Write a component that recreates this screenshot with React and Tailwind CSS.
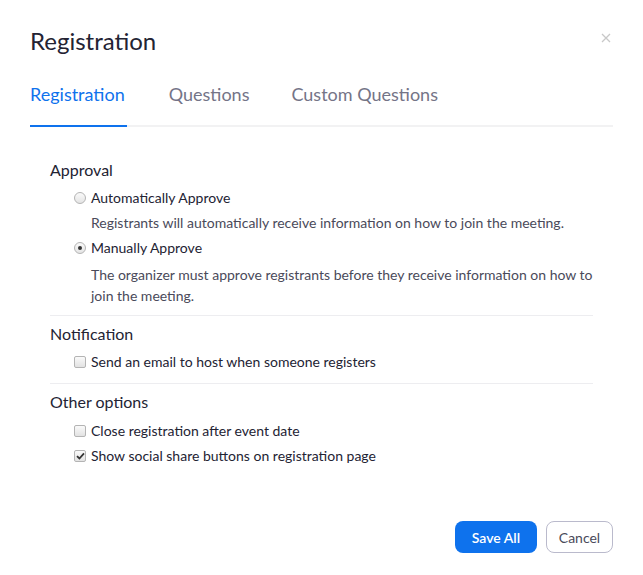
import React, { useState } from 'react';

const Radio = ({ checked }) => (
  <span className="flex h-[12px] w-[12px] shrink-0 items-center justify-center rounded-full border border-[#b4b4b4] bg-gradient-to-b from-[#fafafa] to-[#e4e4e4]">
    {checked && <span className="h-[4px] w-[4px] rounded-full bg-[#333]" />}
  </span>
);

const Checkbox = ({ checked }) => (
  <span className="flex h-[12px] w-[12px] shrink-0 items-center justify-center rounded-[2px] border border-[#b4b4b4] bg-gradient-to-b from-[#fafafa] to-[#e2e2e2]">
    {checked && (
      <svg width="9" height="8" viewBox="0 0 9 8">
        <path d="M1 4.2 L3.4 6.5 L8 1.3" fill="none" stroke="#333" strokeWidth="1.8" />
      </svg>
    )}
  </span>
);

const Option = ({ children, control, className = '' }) => (
  <label className={`flex h-[20px] items-center gap-[5px] pl-[24px] text-[14px] leading-[20px] text-[#232333] ${className}`}>
    {control}
    <span>{children}</span>
  </label>
);

const App = () => {
  const [tab] = useState('Registration');
  const tabs = ['Registration', 'Questions', 'Custom Questions'];

  return (
    <div className="h-[575px] w-[643px] bg-white px-[30px] pt-[25px] font-['Lato','Liberation_Sans',sans-serif]">
      <div className="flex items-center justify-between">
        <h1 className="text-[24px] leading-[32px] text-[#232333]">Registration</h1>
        <button className="mr-[2px] mt-[-6px] text-[#c8c8c8]">
          <svg width="10" height="10" viewBox="0 0 10 10">
            <path d="M1 1 L9 9 M9 1 L1 9" stroke="currentColor" strokeWidth="1.3" />
          </svg>
        </button>
      </div>

      <div className="mt-[20px] flex gap-[42px] border-b-2 border-[#f2f2f3]">
        {tabs.map(t => (
          <div
            key={t}
            className={`-mb-[2px] pb-[14px] text-[18px] leading-[34px] ${
              t === tab ? 'border-b-2 border-[#0e72ed] pr-[2px] text-[#0e72ed]' : 'border-b-2 border-transparent text-[#747487]'
            }`}
          >
            {t}
          </div>
        ))}
      </div>

      <div className="px-[20px] pt-[31px]">
        <h3 className="text-[16px] leading-[24px] text-[#232333]">Approval</h3>
        <Option className="mt-[6px]" control={<Radio />}>Automatically Approve</Option>
        <p className="mt-[5px] pl-[41px] text-[14px] leading-[20px] text-[#4a4a5a]">
          Registrants will automatically receive information on how to join the meeting.
        </p>
        <Option className="mt-[5px]" control={<Radio checked />}>Manually Approve</Option>
        <p className="mt-[6px] pl-[41px] text-[14px] leading-[21px] text-[#4a4a5a]">
          The organizer must approve registrants before they receive information on how to join the meeting.
        </p>

        <div className="mt-[9px] border-t border-[#ededf0]" />

        <h3 className="mt-[6px] text-[16px] leading-[24px] text-[#232333]">Notification</h3>
        <Option className="mt-[6px]" control={<Checkbox />}>Send an email to host when someone registers</Option>

        <div className="mt-[11px] border-t border-[#ededf0]" />

        <h3 className="mt-[6px] text-[16px] leading-[24px] text-[#232333]">Other options</h3>
        <Option className="mt-[7px]" control={<Checkbox />}>Close registration after event date</Option>
        <Option className="mt-[5px]" control={<Checkbox checked />}>Show social share buttons on registration page</Option>
      </div>

      <div className="mt-[55px] flex justify-end gap-[9px]">
        <button className="h-[32px] w-[82px] rounded-[8px] bg-[#0e72ed] text-[14px] font-semibold text-white">
          Save All
        </button>
        <button className="h-[32px] w-[67px] rounded-[8px] border border-[#babacc] text-[14px] text-[#4a4a5a]">
          Cancel
        </button>
      </div>
    </div>
  );
};

export default App;
